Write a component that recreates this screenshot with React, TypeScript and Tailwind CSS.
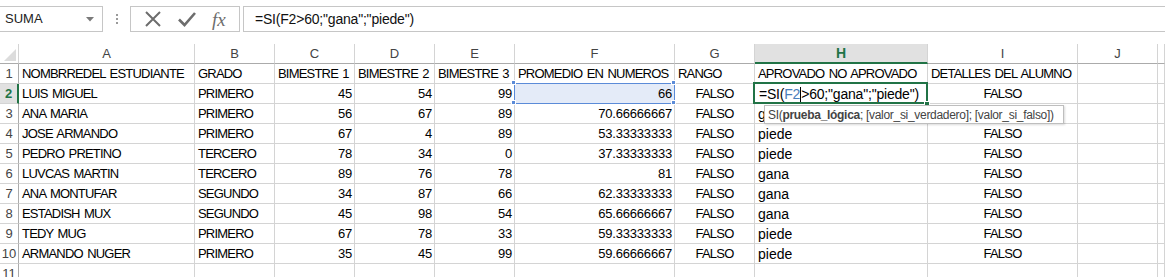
import React from 'react';

type Row = {
    n: number;
    name: string;
    grado: string;
    b1: string;
    b2: string;
    b3: string;
    prom: string;
    rango: string;
    aprov: string;
    det: string;
};

const rows: Row[] = [
    { n: 3, name: 'ANA MARIA', grado: 'PRIMERO', b1: '56', b2: '67', b3: '89', prom: '70.66666667', rango: 'FALSO', aprov: 'gana', det: '' },
    { n: 4, name: 'JOSE ARMANDO', grado: 'PRIMERO', b1: '67', b2: '4', b3: '89', prom: '53.33333333', rango: 'FALSO', aprov: 'piede', det: 'FALSO' },
    { n: 5, name: 'PEDRO PRETINO', grado: 'TERCERO', b1: '78', b2: '34', b3: '0', prom: '37.33333333', rango: 'FALSO', aprov: 'piede', det: 'FALSO' },
    { n: 6, name: 'LUVCAS MARTIN', grado: 'TERCERO', b1: '89', b2: '76', b3: '78', prom: '81', rango: 'FALSO', aprov: 'gana', det: 'FALSO' },
    { n: 7, name: 'ANA MONTUFAR', grado: 'SEGUNDO', b1: '34', b2: '87', b3: '66', prom: '62.33333333', rango: 'FALSO', aprov: 'gana', det: 'FALSO' },
    { n: 8, name: 'ESTADISH MUX', grado: 'SEGUNDO', b1: '45', b2: '98', b3: '54', prom: '65.66666667', rango: 'FALSO', aprov: 'gana', det: 'FALSO' },
    { n: 9, name: 'TEDY MUG', grado: 'PRIMERO', b1: '67', b2: '78', b3: '33', prom: '59.33333333', rango: 'FALSO', aprov: 'piede', det: 'FALSO' },
    { n: 10, name: 'ARMANDO NUGER', grado: 'PRIMERO', b1: '35', b2: '45', b3: '99', prom: '59.66666667', rango: 'FALSO', aprov: 'piede', det: 'FALSO' },
];

const letters = ['A', 'B', 'C', 'D', 'E', 'F', 'G', 'H', 'I', 'J', ''];

const cell = 'h-[20px] border-r border-b border-[#d4d4d4] flex items-center overflow-hidden whitespace-nowrap pt-[1px]';
const left = `${cell} pl-[3px] tracking-[-0.8px] [word-spacing:1.5px]`;
const lower = `${cell} pl-[3px] text-[14px]`;
const right = `${cell} justify-end pr-[2px] tracking-[-0.2px]`;
const center = `${cell} justify-center tracking-[-0.8px]`;

function RowNum({ n, active = false }: { n: number; active?: boolean }) {
    return (
        <div
            className={
                active
                    ? 'h-[20px] border-b border-[#d4d4d4] border-r-2 border-r-[#217346] bg-[#e1e1e1] flex items-center justify-center text-[13px] font-bold text-[#217346]'
                    : 'h-[20px] border-b border-[#d4d4d4] border-r border-r-[#ababab] flex items-center justify-center text-[13px] text-[#444]'
            }
        >
            {n}
        </div>
    );
}

function Handle({ className }: { className: string }) {
    return <div className={`absolute w-[5px] h-[5px] bg-[#5b8bd8] border border-white ${className}`} />;
}

export default function App() {
    return (
        <div className="w-[1165px] h-[277px] overflow-hidden bg-white font-['Liberation_Sans',Arial,sans-serif] text-black">
            {/* Formula bar */}
            <div className="h-[36px] flex items-center pt-[5px] pb-[3px]">
                <div className="w-[103px] h-[26px] border border-[#c6c6c6] border-l-0 flex items-center justify-between pl-[5px] pr-[8px] text-[13px] text-[#222]">
                    <span>SUMA</span>
                    <svg width="8" height="5" viewBox="0 0 8 5"><path d="M0 0h8L4 4.5z" fill="#7a7a7a" /></svg>
                </div>
                <div className="w-[27px] flex flex-col items-center gap-[2px]">
                    <span className="w-[2px] h-[2px] bg-[#9a9a9a]" />
                    <span className="w-[2px] h-[2px] bg-[#9a9a9a]" />
                    <span className="w-[2px] h-[2px] bg-[#9a9a9a]" />
                </div>
                <div className="w-[110px] h-[26px] border border-[#c6c6c6] flex items-center justify-around px-[6px]">
                    <svg width="18" height="18" viewBox="0 0 18 18"><path d="M2 2L16 16M16 2L2 16" stroke="#6d6d6d" strokeWidth="2" /></svg>
                    <svg width="20" height="18" viewBox="0 0 20 18"><path d="M2 9.5L7.5 15L18 3" stroke="#6d6d6d" strokeWidth="2.6" fill="none" /></svg>
                    <span className="font-['Liberation_Serif',serif] italic text-[19px] text-[#6d6d6d] leading-none">fx</span>
                </div>
                <div className="flex-1 h-[26px] ml-[3px] border border-[#c6c6c6] border-r-0 flex items-center pl-[11px] text-[14px] text-[#111] tracking-[-0.2px]">
                    =SI(F2&gt;60;"gana";"piede")
                </div>
            </div>

            {/* Sheet */}
            <div className="relative mt-[8px]">
                <div className="grid grid-cols-[19px_176px_80px_80px_80px_80px_160px_80px_173px_150px_80px_1fr] text-[13px]">
                    {/* column headers */}
                    <div className="h-[20px] border-r border-b border-[#ababab] border-r-[#d4d4d4] flex items-end justify-end pr-[2px] pb-[2px]">
                        <svg width="12" height="12" viewBox="0 0 12 12"><path d="M12 0V12H0z" fill="#dcdcdc" /></svg>
                    </div>
                    {letters.map((l, i) =>
                        l === 'H' ? (
                            <div key={i} className="h-[20px] border-r border-[#d4d4d4] border-b-2 border-b-[#217346] bg-[#e1e1e1] flex items-center justify-center font-bold text-[#217346] text-[14px]">
                                {l}
                            </div>
                        ) : (
                            <div key={i} className="h-[20px] border-r border-[#d4d4d4] border-b border-b-[#ababab] flex items-center justify-center text-[#444] text-[13px]">
                                {l}
                            </div>
                        )
                    )}

                    {/* row 1 */}
                    <RowNum n={1} />
                    <div className={left}>NOMBRREDEL ESTUDIANTE</div>
                    <div className={left}>GRADO</div>
                    <div className={left}>BIMESTRE 1</div>
                    <div className={left}>BIMESTRE 2</div>
                    <div className={left}>BIMESTRE 3</div>
                    <div className={left}>PROMEDIO EN NUMEROS</div>
                    <div className={left}>RANGO</div>
                    <div className={left}>APROVADO NO APROVADO</div>
                    <div className={left}>DETALLES DEL ALUMNO</div>
                    <div className={cell} />
                    <div className={cell} />

                    {/* row 2 */}
                    <RowNum n={2} active />
                    <div className={left}>LUIS MIGUEL</div>
                    <div className={left}>PRIMERO</div>
                    <div className={right}>45</div>
                    <div className={right}>54</div>
                    <div className={right}>99</div>
                    <div className={`${right} bg-[#e4ebf8]`}>66</div>
                    <div className={center}>FALSO</div>
                    <div className={`${lower} relative overflow-visible tracking-[-0.2px]`}>
                        <span className="pl-[1px]">=SI(</span>
                        <span className="text-[#4a7ebb]">F2</span>
                        <span className="w-[1px] h-[15px] bg-black" />
                        <span>&gt;60;"gana";"piede")</span>
                    </div>
                    <div className={center}>FALSO</div>
                    <div className={cell} />
                    <div className={cell} />

                    {rows.map(r => (
                        <React.Fragment key={r.n}>
                            <RowNum n={r.n} />
                            <div className={left}>{r.name}</div>
                            <div className={left}>{r.grado}</div>
                            <div className={right}>{r.b1}</div>
                            <div className={right}>{r.b2}</div>
                            <div className={right}>{r.b3}</div>
                            <div className={right}>{r.prom}</div>
                            <div className={center}>{r.rango}</div>
                            <div className={lower}>{r.aprov}</div>
                            <div className={center}>{r.det}</div>
                            <div className={cell} />
                            <div className={cell} />
                        </React.Fragment>
                    ))}

                    {/* row 11 */}
                    <RowNum n={11} />
                    {letters.map((l, i) => (
                        <div key={`r11-${i}`} className={cell} />
                    ))}
                </div>

                {/* F2 reference highlight */}
                <div className="absolute left-[514px] top-[39px] w-[161px] h-[21px] border border-[#5b8bd8]" />
                <Handle className="left-[511px] top-[36px]" />
                <Handle className="left-[671px] top-[36px]" />
                <Handle className="left-[511px] top-[56px]" />
                <Handle className="left-[671px] top-[56px]" />

                {/* H2 active cell */}
                <div className="absolute left-[753px] top-[38px] w-[175px] h-[22px] border-2 border-[#217346]" />
                <div className="absolute left-[924px] top-[57px] w-[6px] h-[6px] bg-[#217346] border border-white" />

                {/* function tooltip */}
                <div className="absolute left-[764px] top-[61px] w-[300px] h-[19px] bg-white border border-[#bebebe] shadow-[1px_1px_2px_rgba(0,0,0,0.15)] flex items-center pl-[3px] text-[12px] text-[#444] tracking-[-0.3px] whitespace-nowrap">
                    SI(<b className="font-bold">prueba_lógica</b>; [valor_si_verdadero]; [valor_si_falso])
                </div>
            </div>
        </div>
    );
}
